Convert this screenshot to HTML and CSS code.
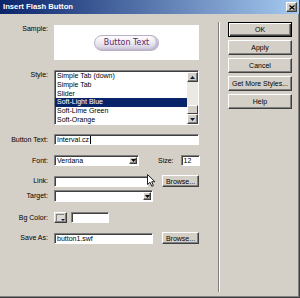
FILE: index.html
```html
<!DOCTYPE html>
<html lang="en">
<head>
    <meta charset="UTF-8">
    <title>Insert Flash Button</title>
    <link rel="stylesheet" href="styles.css">
</head>
<body>
    <div class="window">
        <div class="titlebar">
            <span class="title">Insert Flash Button</span>
            <span class="close">
                <svg width="6" height="5" viewBox="0 0 6 5"><path d="M0.5 0.5 L5.5 4.5 M5.5 0.5 L0.5 4.5" stroke="#000" stroke-width="1.3"/></svg>
            </span>
        </div>
        <div class="main">
            <div class="form">
                <div class="row row-top">
                    <span class="lbl">Sample:</span>
                    <div class="sample"><span class="pill">Button Text</span></div>
                </div>
                <div class="row row-top row-style">
                    <span class="lbl">Style:</span>
                    <div class="listbox">
                        <ul class="items">
                            <li>Simple Tab (down)</li>
                            <li>Simple Tab</li>
                            <li>Slider</li>
                            <li class="selected">Soft-Light Blue</li>
                            <li>Soft-Lime Green</li>
                            <li>Soft-Orange</li>
                        </ul>
                        <div class="scrollbar">
                            <span class="sb-btn"><svg width="5" height="3" viewBox="0 0 5 3"><path d="M2.5 0 L5 3 L0 3 Z" fill="#0a1a40"/></svg></span>
                            <span class="sb-track"><span class="sb-thumb"></span></span>
                            <span class="sb-btn"><svg width="5" height="3" viewBox="0 0 5 3"><path d="M0 0 L5 0 L2.5 3 Z" fill="#0a1a40"/></svg></span>
                        </div>
                    </div>
                </div>
                <div class="row row-text">
                    <span class="lbl">Button Text:</span>
                    <div class="field field-wide">Interval.cz<span class="caret"></span></div>
                </div>
                <div class="row row-font">
                    <span class="lbl">Font:</span>
                    <div class="select select-font">
                        <span>Verdana</span>
                        <span class="drop"><svg width="5" height="3" viewBox="0 0 5 3"><path d="M0 0 L5 0 L2.5 3 Z" fill="#000"/></svg></span>
                    </div>
                    <span class="size-lbl">Size:</span>
                    <div class="field field-size">12</div>
                </div>
                <div class="row row-link">
                    <span class="lbl">Link:</span>
                    <div class="field field-link"></div>
                    <button class="btn btn-browse">Browse...</button>
                    <svg class="pointer" width="9" height="13" viewBox="0 0 9 13"><path d="M0.5 0.5 L0.5 10.5 L3 8.3 L4.8 12.3 L6.4 11.6 L4.7 7.7 L7.9 7.7 Z" fill="#fff" stroke="#222" stroke-width="1"/></svg>
                </div>
                <div class="row row-target">
                    <span class="lbl">Target:</span>
                    <div class="select select-target">
                        <span></span>
                        <span class="drop"><svg width="5" height="3" viewBox="0 0 5 3"><path d="M0 0 L5 0 L2.5 3 Z" fill="#000"/></svg></span>
                    </div>
                </div>
                <div class="row row-bg">
                    <span class="lbl">Bg Color:</span>
                    <span class="swatch"><span class="swatch-box"></span><span class="swatch-arrow"></span></span>
                    <div class="field field-color"></div>
                </div>
                <div class="row row-save">
                    <span class="lbl">Save As:</span>
                    <div class="field field-save">button1.swf</div>
                    <button class="btn btn-browse btn-browse-save">Browse...</button>
                </div>
            </div>
            <div class="separator"></div>
            <div class="actions">
                <button class="btn btn-default">OK</button>
                <button class="btn">Apply</button>
                <button class="btn">Cancel</button>
                <button class="btn">Get More Styles...</button>
                <button class="btn">Help</button>
            </div>
        </div>
    </div>
</body>
</html>
```

FILE: styles.css
```css
* {
    box-sizing: border-box;
    margin: 0;
    padding: 0;
}
body {
    width: 300px;
    height: 298px;
    overflow: hidden;
    background-color: #d4d0c8;
    color: #000;
    font-family: "Liberation Sans", Arial, sans-serif;
    font-size: 7px;
    line-height: 8px;
}
.window {
    width: 300px;
    height: 298px;
    display: flex;
    flex-direction: column;
    border-right: 1px solid #404040;
    border-bottom: 1px solid #404040;
    box-shadow: inset -1px -1px #808080;
}
.titlebar {
    height: 14px;
    flex: none;
    display: flex;
    align-items: center;
    justify-content: space-between;
    padding: 0 2px 0 3px;
    background: linear-gradient(to right, #0a246a, #a6caf0);
    color: white;
    font-weight: bold;
    font-size: 7.7px;
}
.close {
    width: 11px;
    height: 10px;
    display: flex;
    align-items: center;
    justify-content: center;
    background-color: #d4d0c8;
    border: 1px solid;
    border-color: #fff #404040 #404040 #fff;
    box-shadow: inset -1px -1px #808080;
}
.main {
    flex: 1;
    display: flex;
}
.form {
    width: 218px;
    flex: none;
    padding-top: 11px;
}
.separator {
    width: 2px;
    border-left: 1px solid #808080;
    border-right: 1px solid #fff;
    margin: 8px 0 5px;
}
.actions {
    padding: 8px 0 0 8px;
    display: flex;
    flex-direction: column;
    gap: 3px;
}
.btn {
    width: 64px;
    height: 15px;
    background-color: #d4d0c8;
    border: 1px solid;
    border-color: #fff #404040 #404040 #fff;
    box-shadow: inset -1px -1px #808080;
    font-family: "Liberation Sans", Arial, sans-serif;
    font-size: 7px;
    color: #000;
}
.btn-default {
    border-color: #000;
    box-shadow: inset 1px 1px #fff, inset -1px -1px #404040, inset -2px -2px #808080;
}
.row {
    display: flex;
    align-items: center;
    position: relative;
}
.row-top {
    align-items: flex-start;
}
.lbl {
    width: 48px;
    flex: none;
    margin-right: 6px;
    text-align: right;
}
.row-style {
    margin-top: 10px;
}
.row-style .lbl {
    padding-top: 1px;
}
.sample {
    width: 145px;
    height: 35px;
    background-color: white;
    display: flex;
    align-items: center;
    justify-content: center;
}
.pill {
    width: 65px;
    height: 16px;
    border-radius: 8px;
    border: 1px solid #b8b2c6;
    background: linear-gradient(#ffffff, #eeebf3 45%, #cfc9db);
    box-shadow: inset -2px -1px 2px #bdb6cc;
    color: #5a2a6c;
    font-family: "DejaVu Sans", Verdana, sans-serif;
    font-size: 8px;
    line-height: 14px;
    text-align: center;
}
.listbox {
    width: 145px;
    height: 55px;
    display: flex;
    background-color: white;
    border: 1px solid;
    border-color: #808080 #fff #fff #808080;
    box-shadow: inset 1px 1px #404040;
}
.items {
    flex: 1;
    list-style: none;
    overflow: hidden;
    padding-top: 1.3px;
}
.items li {
    height: 8.67px;
    line-height: 8.67px;
    padding-left: 2px;
    white-space: nowrap;
}
.items li.selected {
    background-color: #0a246a;
    color: white;
}
.scrollbar {
    width: 11px;
    display: flex;
    flex-direction: column;
    padding-top: 1px;
}
.sb-btn {
    height: 10px;
    flex: none;
    display: flex;
    align-items: center;
    justify-content: center;
    background-color: #d4d0c8;
    border: 1px solid;
    border-color: #fff #404040 #404040 #fff;
    box-shadow: inset -1px -1px #808080;
}
.sb-track {
    flex: 1;
    background-color: #ece9e3;
    display: flex;
    flex-direction: column;
    justify-content: flex-end;
}
.sb-thumb {
    height: 9px;
    background-color: #d4d0c8;
    border: 1px solid;
    border-color: #fff #404040 #404040 #fff;
}
.field {
    height: 11px;
    background-color: white;
    border: 1px solid;
    border-color: #808080 #fff #fff #808080;
    box-shadow: inset 1px 1px #404040;
    padding-left: 2px;
    line-height: 9px;
    white-space: nowrap;
    display: flex;
    align-items: center;
}
.caret {
    width: 1px;
    height: 8px;
    background-color: #000;
    margin-left: 1px;
}
.row-text {
    margin-top: 9px;
}
.field-wide {
    width: 145px;
}
.row-font {
    margin-top: 10px;
    height: 11px;
}
.select {
    background-color: white;
    border: 1px solid;
    border-color: #808080 #fff #fff #808080;
    box-shadow: inset 1px 1px #404040;
    padding-left: 2px;
    display: flex;
    align-items: center;
    justify-content: space-between;
}
.select-font {
    width: 85px;
    height: 11px;
}
.drop {
    width: 8px;
    height: calc(100% - 2px);
    margin-right: 1px;
    display: flex;
    align-items: center;
    justify-content: center;
    background-color: #d4d0c8;
    border: 1px solid;
    border-color: #fff #404040 #404040 #fff;
    box-shadow: inset -1px -1px #808080;
}
.size-lbl {
    margin-left: 19px;
    margin-right: 7px;
}
.field-size {
    width: 19px;
}
.row-link {
    margin-top: 9px;
    height: 12px;
}
.field-link {
    width: 94px;
    margin-top: 1px;
}
.btn-browse {
    width: 37px;
    height: 12px;
    margin-left: 14px;
}
.btn-browse-save {
    margin-left: 9px;
}
.pointer {
    position: absolute;
    left: 147px;
    top: -1px;
}
.row-target {
    margin-top: 3px;
}
.select-target {
    width: 99px;
    height: 12px;
}
.row-bg {
    margin-top: 10px;
}
.swatch {
    width: 13px;
    height: 11px;
    margin-right: 4px;
    position: relative;
    background-color: #d4d0c8;
    border: 1px solid;
    border-color: #fff #404040 #404040 #fff;
    box-shadow: inset -1px -1px #808080;
}
.swatch-box {
    position: absolute;
    left: 1px;
    top: 1px;
    width: 8px;
    height: 7px;
    border-top: 1px solid #808080;
    border-left: 1px solid #808080;
    background-color: #dedbd4;
}
.swatch-arrow {
    position: absolute;
    right: 1px;
    bottom: 1px;
    border-left: 2px solid transparent;
    border-right: 2px solid transparent;
    border-top: 2px solid #0a1a40;
}
.field-color {
    width: 38px;
}
.row-save {
    margin-top: 9px;
    height: 12px;
}
.field-save {
    width: 99px;
}
```
